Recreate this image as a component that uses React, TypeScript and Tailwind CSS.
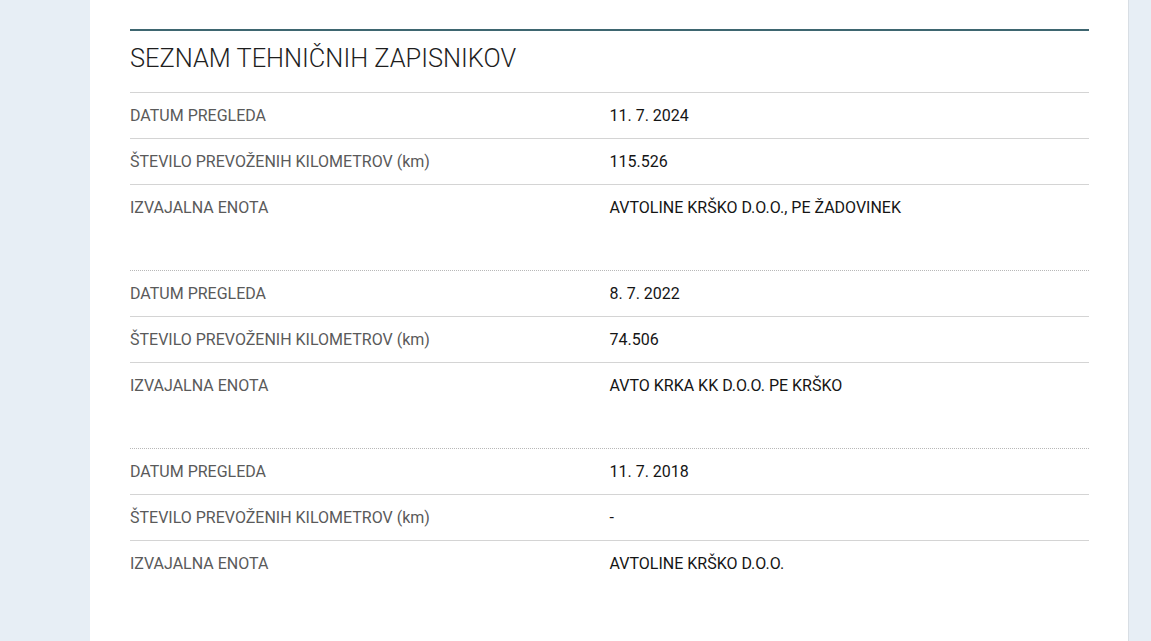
import React from 'react';

type Zapisnik = {
  datum: string;
  km: string;
  enota: string;
};

const zapisniki: Zapisnik[] = [
  { datum: '11. 7. 2024', km: '115.526', enota: 'AVTOLINE KRŠKO D.O.O., PE ŽADOVINEK' },
  { datum: '8. 7. 2022', km: '74.506', enota: 'AVTO KRKA KK D.O.O. PE KRŠKO' },
  { datum: '11. 7. 2018', km: '-', enota: 'AVTOLINE KRŠKO D.O.O.' },
];

const Row: React.FC<{ label: string; value: string; top: string }> = ({ label, value, top }) => (
  <div className={`grid grid-cols-2 h-[46px] items-center ${top}`}>
    <div className="text-[#5a5a5a]">{label}</div>
    <div className="text-[#151515]">{value}</div>
  </div>
);

const App: React.FC = () => {
  return (
    <div
      className="min-h-[641px] h-[641px] bg-[#e7eef5] flex overflow-hidden"
      style={{ fontFamily: 'Roboto, "Noto Sans", sans-serif' }}
    >
      <div className="w-[90px] shrink-0" />
      <div className="w-[1039px] shrink-0 bg-white border-r border-[#d8dee4] pl-10 pr-[39px] pt-[29px]">
        <div className="border-t-2 border-[#3e6670]">
          <h2 className="pt-[10px] pb-[17px] leading-[34px] text-[25.4px] font-light text-[#1e1e1e]">
            SEZNAM TEHNIČNIH ZAPISNIKOV
          </h2>
        </div>
        <div className="text-[16px] font-normal">
          {zapisniki.map((z, i) => (
            <div key={i} className="pb-[40px]">
              <Row
                label="DATUM PREGLEDA"
                value={z.datum}
                top={i === 0 ? 'border-t border-[#d4d4d4]' : 'border-t border-dotted border-[#b8b8b8]'}
              />
              <Row label="ŠTEVILO PREVOŽENIH KILOMETROV (km)" value={z.km} top="border-t border-[#d4d4d4]" />
              <Row label="IZVAJALNA ENOTA" value={z.enota} top="border-t border-[#d4d4d4]" />
            </div>
          ))}
        </div>
      </div>
    </div>
  );
};

export default App;
